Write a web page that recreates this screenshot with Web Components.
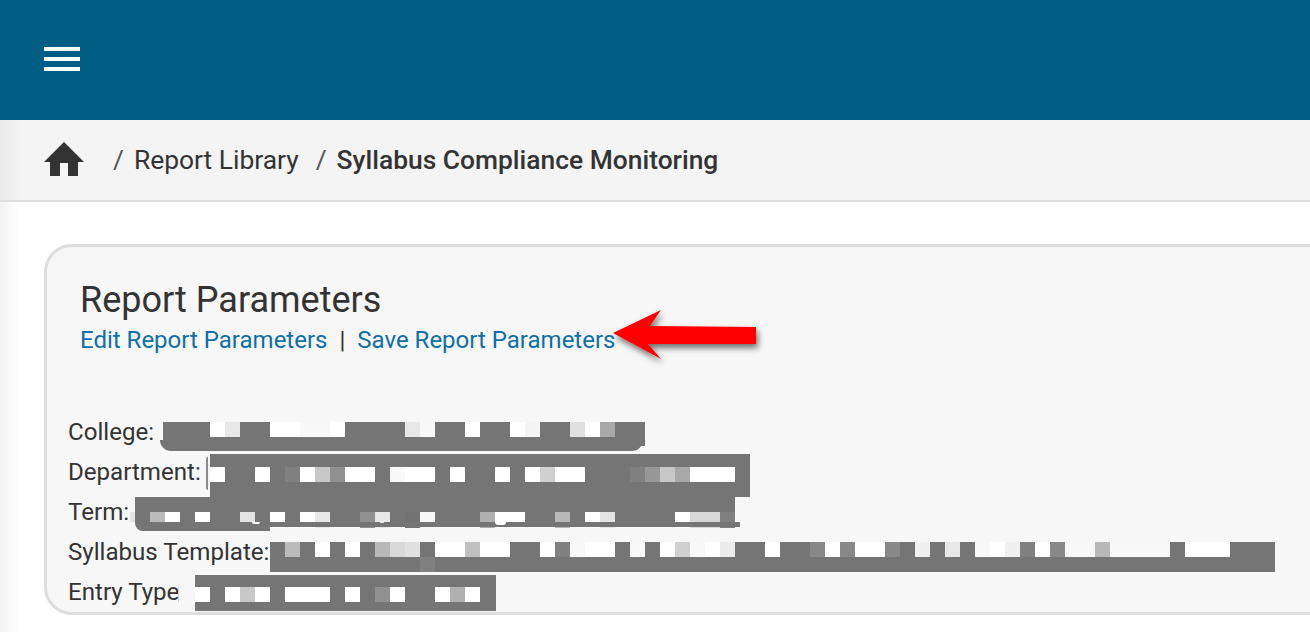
<!DOCTYPE html>
<html><head><meta charset="utf-8"><style>
html,body{margin:0;padding:0;height:632px;overflow:hidden;font-family:Roboto,"Liberation Sans",sans-serif;color:#333}
body{background:linear-gradient(90deg,#f3f3f3 0,#fff 20px)}
</style></head><body>
<template id="t-bar"><style>
:host{display:flex;align-items:center;height:120px;padding:0 0 2px 44px;background:#005e85;box-sizing:border-box}
svg{display:block}
</style><svg width="36" height="24" viewBox="0 0 36 24" fill="#fff"><rect y="0" width="36" height="4"/><rect y="10" width="36" height="4"/><rect y="20" width="36" height="4"/></svg></template>
<template id="t-crumbs"><style>
:host{display:flex;align-items:center;height:82px;padding-left:44px;box-sizing:border-box;background:linear-gradient(90deg,#ebebeb 0,#f4f4f4 20px);border-bottom:2px solid #ddd;font-size:26.4px;color:#333}
svg{display:block;margin:0 29px 2px 0}
span.s{color:#555;margin-right:10px}
span.l{margin-right:17px}
b{font-weight:500}
</style><svg width="40" height="34" viewBox="0 0 40 34" fill="#333"><path d="M20 0 L40 20 L34 20 L34 34 L24 34 L24 21 L16 21 L16 34 L6 34 L6 20 L0 20 Z"/></svg><span class="s">/</span><span class="l">Report Library</span><span class="s">/</span><b>Syllabus Compliance Monitoring</b></template>
<template id="t-panel"><style>
:host{display:block;box-sizing:border-box;margin:42px -40px 0 44px;height:371px;background:#f7f7f7;border:3px solid #ddd;border-radius:28px;padding:29px 0 0 33px;position:relative}
h2{margin:0;font-size:36px;line-height:49px;font-weight:400;color:#333}
</style><h2>Report Parameters</h2><slot></slot></template>
<template id="t-links"><style>
:host{display:flex;align-items:center;height:30px;font-size:24px;color:#333}
a{color:#0f6fa8;text-decoration:none}
i{font-style:normal;margin:0 12px}
</style><a href="#">Edit Report Parameters</a><i>|</i><a href="#">Save Report Parameters</a></template>
<template id="t-param"><style>
:host{display:block;font-size:24.1px;line-height:40px;height:40.1px;margin-left:-12px;color:#333;white-space:nowrap}
</style><slot></slot></template>
<template id="t-redact"><style>
:host{display:block;position:absolute;box-sizing:border-box}
.row{position:absolute;display:flex}
.row span{display:block;width:15px;height:100%;flex:none}
</style><div class="row"></div></template>

<app-bar></app-bar>
<crumb-bar></crumb-bar>
<param-panel>
  <link-row></link-row>
  <div style="height:56.5px"></div>
  <param-line>College:</param-line>
  <param-line>Department:</param-line>
  <param-line>Term:</param-line>
  <param-line>Syllabus Template:</param-line>
  <param-line>Entry Type</param-line>
</param-panel>
<red-arrow></red-arrow>

<redact-bar box="160,440,483,11" radius="0 0 12px 12px"></redact-bar>
<redact-bar box="163,422,482,24" row="2,0,15" cells="0 0 0 1 e8 0 0 1 1 f8 f8 1 0 0 0 0 e8 f8 0 0 1 0 0 1 f4 0 0 e0 1 a8 0 0"></redact-bar>

<redact-bar box="206,457,2,33" radius="2px 0 0 2px" color="#8a8a8a"></redact-bar>
<redact-bar box="210,454,540,43" row="0,13,15" cells="1 0 0 1 0 80 1 c8 90 1 1 0 f8 1 1 0 1 0 0 1 0 1 d0 1 1 0 0 0 80 98 c8 a8 1 1 1 0"></redact-bar>

<redact-bar box="130,512,5,10" color="#e4e4e4"></redact-bar>
<redact-bar box="135,497,135,34" radius="0 0 0 8px" row="0,15,10" cells="0 bb 1 0 1 0 0 e4 0"></redact-bar>
<redact-bar box="270,497,465,30" row="0,15,16" cells="1 0 1 e8 0 0 90 e8 0 72 f8 0 0 0 b0 1 1 0 0 b8 0 1 e4 0 0 0 0 1 d8 d8 80"></redact-bar>
<redact-bar box="270,522,470,5"></redact-bar>
<redact-bar box="252,522,8,2" radius="0 0 4px 4px" color="#fff"></redact-bar>
<redact-bar box="495,522,11,3" radius="0 0 6px 6px" color="#fff"></redact-bar>
<redact-bar box="380,522,4,1" color="#e8e8e8"></redact-bar>

<redact-bar box="270,542,1005,30" row="0,0,15" cells="0 bb 0 1 0 1 0 b8 d8 e0 0 1 1 c0 1 1 0 0 1 80 f8 1 1 0 f8 0 1 d0 f8 1 ec 0 0 1 0 0 88 1 88 1 1 88 0 f0 0 e8 0 f8 1 f0 80 1 88 f8 f8 b8 f8 f8 f8 f8 0 1 1 1 0 0 0"></redact-bar>
<redact-bar box="420,557,15,15" color="#808080"></redact-bar>

<redact-bar box="178,587,1,15" color="#cfcfcf"></redact-bar>
<redact-bar box="195,575,301,36" row="0,12,15" cells="1 0 1 c8 1 0 1 1 1 0 1 0 90 1 0 0 1 b0 1 0"></redact-bar>

<script>
function tpl(id){return class extends HTMLElement{constructor(){super();this.attachShadow({mode:'open'}).appendChild(document.getElementById(id).content.cloneNode(true));}}}
customElements.define('app-bar',tpl('t-bar'));
customElements.define('crumb-bar',tpl('t-crumbs'));
customElements.define('param-panel',tpl('t-panel'));
customElements.define('link-row',tpl('t-links'));
customElements.define('param-line',tpl('t-param'));
customElements.define('red-arrow',class extends HTMLElement{constructor(){super();this.attachShadow({mode:'open'}).innerHTML='<style>:host{display:block;position:absolute;left:610px;top:305px}svg{display:block;overflow:visible}</style><svg width="150" height="60" viewBox="0 0 150 60"><defs><filter id="s" x="-20%" y="-40%" width="140%" height="180%"><feDropShadow dx="2" dy="4" stdDeviation="3" flood-color="#000" flood-opacity=".55"/></filter></defs><path filter="url(#s)" fill="#f00" d="M3 28 L51 5 L40 21 L146 22 L146 39 L38 39 L51 54 Z"/></svg>';}});
customElements.define('redact-bar',class extends HTMLElement{constructor(){super();this.attachShadow({mode:'open'}).appendChild(document.getElementById('t-redact').content.cloneNode(true));}
connectedCallback(){
 const [x,y,w,h]=this.getAttribute('box').split(',');
 this.style.cssText=`left:${x}px;top:${y}px;width:${w}px;height:${h}px;background:${this.getAttribute('color')||'#757575'};border-radius:${this.getAttribute('radius')||0}`;
 const row=this.shadowRoot.querySelector('.row'),spec=this.getAttribute('row');
 if(!spec)return;
 const [rx,ry,rh]=spec.split(',');
 row.style.cssText=`left:${rx}px;top:${ry}px;height:${rh}px`;
 for(const c of this.getAttribute('cells').split(' ')){
  const s=document.createElement('span');
  if(c!=='0')s.style.background=c==='1'?'#fff':'#'+c+c+c;
  row.appendChild(s);
 }
}});
</script>
</body></html>
